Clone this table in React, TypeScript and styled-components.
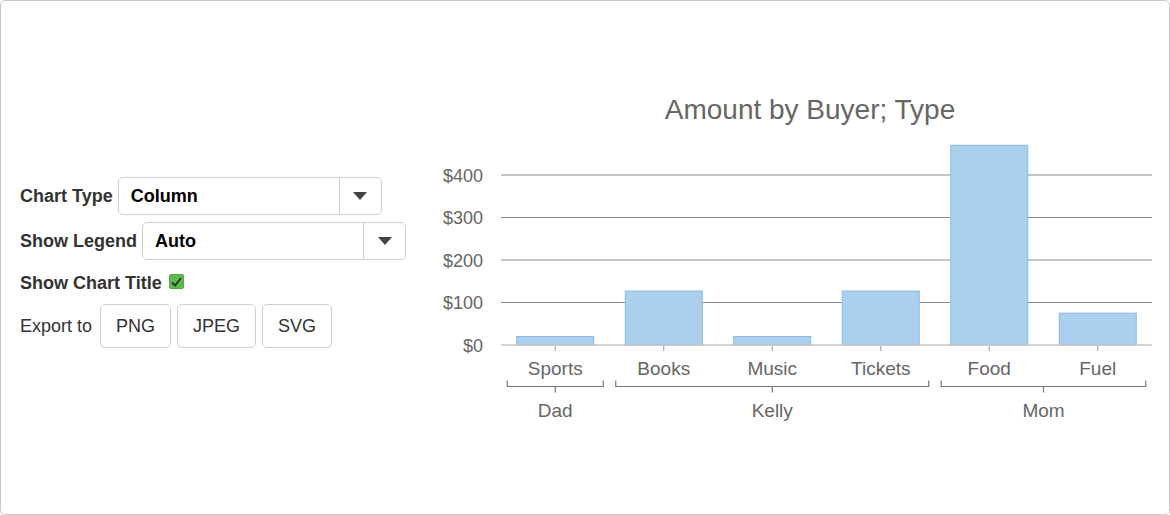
import React, { useState } from 'react';
import styled, { createGlobalStyle } from 'styled-components';

const GlobalStyle = createGlobalStyle`
  html, body {
    margin: 0;
    padding: 0;
    background: #fff;
  }
  body {
    font-family: "Liberation Sans", Arial, sans-serif;
  }
`;

const data = [
  { buyer: 'Dad', type: 'Sports', amount: 20 },
  { buyer: 'Kelly', type: 'Books', amount: 127 },
  { buyer: 'Kelly', type: 'Music', amount: 20 },
  { buyer: 'Kelly', type: 'Tickets', amount: 127 },
  { buyer: 'Mom', type: 'Food', amount: 470 },
  { buyer: 'Mom', type: 'Fuel', amount: 75 },
];

// plot geometry (viewBox uses page coordinates)
const PLOT_LEFT = 501;
const PLOT_RIGHT = 1152;
const BASE_Y = 345;
const PX_PER_UNIT = 0.425;
const CAT_W = (PLOT_RIGHT - PLOT_LEFT) / data.length;
const BAR_W = 77;

const yOf = (v: number) => BASE_Y - v * PX_PER_UNIT;
const xOf = (i: number) => PLOT_LEFT + CAT_W * i + CAT_W / 2;

const Chart = () => {
  const groups: { name: string; first: number; last: number }[] = [];
  data.forEach((d, i) => {
    const g = groups[groups.length - 1];
    if (g && g.name === d.buyer) g.last = i;
    else groups.push({ name: d.buyer, first: i, last: i });
  });

  return (
    <ChartSvg viewBox="420 80 750 355" width={750} height={355}>
      <text x={810} y={119} textAnchor="middle" fontSize={28} fill="#666">
        Amount by Buyer; Type
      </text>

      {[100, 200, 300, 400].map(v => (
        <line key={v} x1={PLOT_LEFT} x2={PLOT_RIGHT} y1={yOf(v)} y2={yOf(v)} stroke="#8c8c8c" strokeWidth={1} />
      ))}
      {[0, 100, 200, 300, 400].map(v => (
        <text key={v} x={483} y={yOf(v) + 6.5} textAnchor="end" fontSize={18} fill="#666">
          ${v}
        </text>
      ))}

      {data.map((d, i) => (
        <rect
          key={d.type}
          x={xOf(i) - BAR_W / 2}
          y={yOf(d.amount)}
          width={BAR_W}
          height={BASE_Y - yOf(d.amount)}
          fill="#abd0ed"
          stroke="#8bbbe5"
          strokeWidth={1}
        />
      ))}

      <line x1={PLOT_LEFT} x2={PLOT_RIGHT} y1={BASE_Y} y2={BASE_Y} stroke="#c4c4c4" strokeWidth={1.5} />

      {data.map((d, i) => (
        <g key={d.type}>
          <line x1={xOf(i)} x2={xOf(i)} y1={BASE_Y + 1} y2={BASE_Y + 6} stroke="#999" />
          <text x={xOf(i)} y={375} textAnchor="middle" fontSize={19} fill="#666">
            {d.type}
          </text>
        </g>
      ))}

      {groups.map(g => {
        const x1 = xOf(g.first) - 48;
        const x2 = xOf(g.last) + 48;
        const mid = (x1 + x2) / 2;
        return (
          <g key={g.name}>
            <path
              d={`M${x1} 380.5 V386.5 H${x2} V380.5`}
              fill="none"
              stroke="#777"
              strokeWidth={1.2}
            />
            <line x1={mid} x2={mid} y1={386.5} y2={392.5} stroke="#777" strokeWidth={1.2} />
            <text x={mid} y={417} textAnchor="middle" fontSize={19} fill="#666">
              {g.name}
            </text>
          </g>
        );
      })}
    </ChartSvg>
  );
};

const Select = ({ value, width }: { value: string; width: number }) => (
  <SelectBox width={width}>
    <SelectValue>{value}</SelectValue>
    <SelectCaret>
      <svg width="14" height="8" viewBox="0 0 14 8">
        <path d="M0 0 H14 L7 8 Z" fill="#444" />
      </svg>
    </SelectCaret>
  </SelectBox>
);

export default function App() {
  const [showTitle, toggleTitle] = useState(true);

  return (
    <>
      <GlobalStyle />
      <Frame>
        <Controls>
          <Row>
            <Label>Chart Type</Label>
            <Select value="Column" width={264} />
          </Row>
          <Row space={7}>
            <Label>Show Legend</Label>
            <Select value="Auto" width={264} />
          </Row>
          <Row space={13} height={20}>
            <Label>Show Chart Title</Label>
            <Check onClick={() => toggleTitle(!showTitle)} checked={showTitle}>
              {showTitle && (
                <svg width="11" height="10" viewBox="0 0 11 10">
                  <path d="M1 5.5 L4 8.5 L10 1" fill="none" stroke="#2b3a2b" strokeWidth={2} />
                </svg>
              )}
            </Check>
          </Row>
          <Row space={11} height={44}>
            <Plain>Export to</Plain>
            <Buttons>
              <ExportButton>PNG</ExportButton>
              <ExportButton>JPEG</ExportButton>
              <ExportButton>SVG</ExportButton>
            </Buttons>
          </Row>
        </Controls>
        <Chart />
      </Frame>
    </>
  );
}

const Frame = styled.div`
  box-sizing: border-box;
  width: 1170px;
  height: 515px;
  border: 1px solid #c8c8c8;
  border-radius: 5px;
  display: flex;
  align-items: center;
  overflow: hidden;
`;

const Controls = styled.div`
  box-sizing: border-box;
  width: 419px;
  flex-shrink: 0;
  padding-left: 19px;
  margin-top: 10px;
  display: flex;
  flex-direction: column;
`;

const Row = styled.div<{ space?: number; height?: number }>`
  display: flex;
  align-items: center;
  gap: 5px;
  margin-top: ${p => p.space || 0}px;
  height: ${p => p.height || 38}px;
`;

const Label = styled.span`
  font-size: 18px;
  font-weight: bold;
  color: #333;
  white-space: nowrap;
`;

const Plain = styled.span`
  font-size: 18px;
  color: #333;
  white-space: nowrap;
  margin-right: 3px;
`;

const SelectBox = styled.div<{ width: number }>`
  box-sizing: border-box;
  width: ${p => p.width}px;
  height: 38px;
  border: 1px solid #cfcfcf;
  border-radius: 5px;
  display: flex;
  align-items: stretch;
  background: #fff;
`;

const SelectValue = styled.div`
  flex: 1;
  display: flex;
  align-items: center;
  padding-left: 12px;
  font-size: 18px;
  font-weight: bold;
  color: #000;
`;

const SelectCaret = styled.div`
  width: 41px;
  border-left: 1px solid #cfcfcf;
  display: flex;
  align-items: center;
  justify-content: center;
`;

const Check = styled.div<{ checked: boolean }>`
  box-sizing: border-box;
  width: 15px;
  height: 15px;
  margin-left: 2px;
  margin-top: -3px;
  border-radius: 2px;
  background: ${p => (p.checked ? '#5dba4c' : '#fff')};
  border: 1px solid ${p => (p.checked ? '#52a843' : '#aaa')};
  display: flex;
  align-items: center;
  justify-content: center;
  cursor: pointer;
`;

const Buttons = styled.div`
  display: flex;
  gap: 6px;
`;

const ExportButton = styled.button`
  box-sizing: border-box;
  height: 44px;
  padding: 0 15px;
  border: 1px solid #cfcfcf;
  border-radius: 5px;
  background: #fff;
  font-family: "Liberation Sans", Arial, sans-serif;
  font-size: 18px;
  color: #333;
  cursor: pointer;
`;

const ChartSvg = styled.svg`
  flex-shrink: 0;
  display: block;
  font-family: "Liberation Sans", Arial, sans-serif;
`;
